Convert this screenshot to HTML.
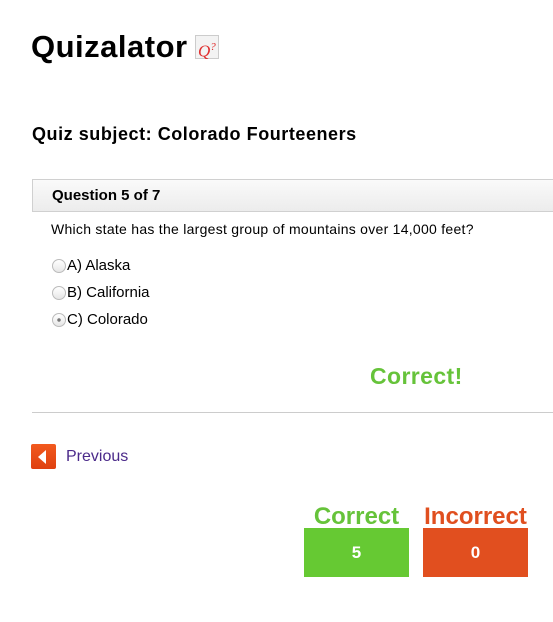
<!DOCTYPE html>
<html><head><style>
body{margin:0;background:#fff;font-family:"Liberation Sans",Arial,sans-serif;color:#000;width:553px;height:622px;overflow:hidden;position:relative}
.a{position:absolute;white-space:nowrap}
</style></head><body>
<div class="a" style="left:31px;top:29px;font-size:31px;font-weight:bold;letter-spacing:0.5px">Quizalator</div>
<div class="a" style="left:195px;top:35px;width:22px;height:22px;border:1px solid #ccc;background:#f3f3f3;font-family:'Liberation Serif',serif;font-style:italic;color:#e03030;font-size:17px;line-height:22px;text-indent:2px">Q<sup style="font-size:11px">?</sup></div>
<div class="a" style="left:32px;top:124px;font-size:18px;font-weight:bold;letter-spacing:0.55px">Quiz subject: Colorado Fourteeners</div>
<div class="a" style="left:32px;top:179px;width:530px;height:31px;border:1px solid #d0d0d0;background:linear-gradient(#fafafa,#ececec)"></div>
<div class="a" style="left:52px;top:187px;font-size:15px;font-weight:bold">Question 5 of 7</div>
<div class="a" style="left:51px;top:221px;font-size:14px;letter-spacing:0.27px">Which state has the largest group of mountains over 14,000 feet?</div>
<div class="a" style="left:52px;top:259px;width:12px;height:12px;border:1px solid #bbb;border-radius:50%;background:linear-gradient(#fff,#e6e6e6)"></div>
<div class="a" style="left:67px;top:257px;font-size:15px">A) Alaska</div>
<div class="a" style="left:52px;top:286px;width:12px;height:12px;border:1px solid #bbb;border-radius:50%;background:linear-gradient(#fff,#e6e6e6)"></div>
<div class="a" style="left:67px;top:284px;font-size:15px">B) California</div>
<div class="a" style="left:52px;top:313px;width:12px;height:12px;border:1px solid #bbb;border-radius:50%;background:radial-gradient(circle,#777 0 1.5px,transparent 2px),linear-gradient(#fff,#e6e6e6)"></div>
<div class="a" style="left:67px;top:311px;font-size:15px">C) Colorado</div>
<div class="a" style="left:370px;top:363px;font-size:23px;font-weight:bold;color:#66c33a;letter-spacing:0.4px">Correct!</div>
<div class="a" style="left:32px;top:412px;width:521px;height:1px;background:#ccc"></div>
<div class="a" style="left:31px;top:444px;width:25px;height:25px;border-radius:2px;background:linear-gradient(#f25a1e,#df4010)"></div>
<div class="a" style="left:38px;top:450px;width:0;height:0;border-top:7px solid transparent;border-bottom:7px solid transparent;border-right:8px solid #fff"></div>
<div class="a" style="left:66px;top:448px;font-size:16px;color:#4b2a8a">Previous</div>
<div class="a" style="left:300px;top:503px;width:113px;text-align:center;font-size:24px;font-weight:bold;color:#66c33a">Correct</div>
<div class="a" style="left:418px;top:503px;width:115px;text-align:center;font-size:24px;font-weight:bold;color:#e04f1f">Incorrect</div>
<div class="a" style="left:304px;top:528px;width:105px;height:49px;background:#66c933;color:#fff;font-weight:bold;font-size:17px;text-align:center;line-height:49px">5</div>
<div class="a" style="left:423px;top:528px;width:105px;height:49px;background:#e14f1f;color:#fff;font-weight:bold;font-size:17px;text-align:center;line-height:49px">0</div>
</body></html>
